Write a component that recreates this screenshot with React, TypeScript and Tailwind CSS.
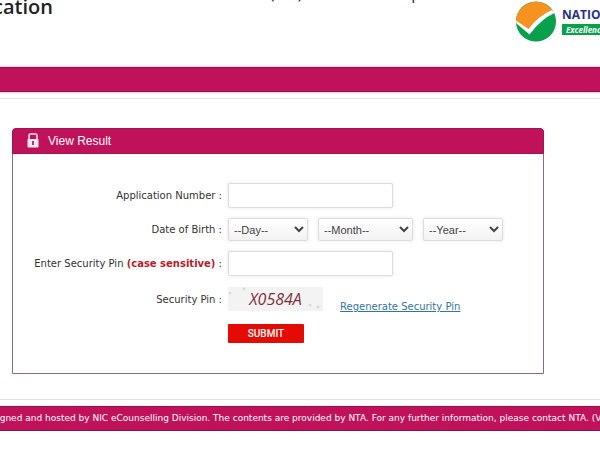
import type { ReactNode } from "react";

const DAYS = Array.from({ length: 31 }, (_, i) => String(i + 1).padStart(2, "0"));
const MONTHS = ["January", "February", "March", "April", "May", "June", "July", "August", "September", "October", "November", "December"];
const YEARS = Array.from({ length: 20 }, (_, i) => String(2005 - i));

const inputClass =
  "w-[165px] h-[25px] px-2 rounded-xs border border-[#dcdcdc] bg-white text-[11px] shadow-[0_0_3px_1px_rgba(0,0,0,0.06)] outline-none";
const selectClass =
  "h-[23px] pl-px pr-0 rounded-xs border border-[#dcdcdc] bg-linear-to-b from-white to-[#f3f3f3] text-[#444] font-['Liberation_Sans',sans-serif] text-[11px] shadow-[0_0_3px_1px_rgba(0,0,0,0.06)] outline-none";

function Row({ label, htmlFor, children }: { label: ReactNode; htmlFor?: string; children: ReactNode }) {
  return (
    <div className="flex items-center">
      <label htmlFor={htmlFor} className="w-[209px] shrink-0 text-right whitespace-nowrap mr-[6px]">
        {label} :
      </label>
      {children}
    </div>
  );
}

function Logo() {
  return (
    <svg width="40" height="41" viewBox="0 0 40 41" className="shrink-0" aria-hidden="true">
      <circle cx="20" cy="20.5" r="20" fill="#08a04c" />
      <path d="M0 20.5 A20 20 0 0 1 36.500 9.500 Q24 15 13 29 Z" fill="#f7921e" />
      <path d="M0 19.500 L12.500 28 Q22 15 36 9 L38.500 12 Q25 18 13.500 33.500 L0.500 22.500 Z" fill="#fff" />
    </svg>
  );
}

function Lock() {
  return (
    <svg width="12" height="15" viewBox="0 0 12 15" className="shrink-0" aria-hidden="true">
      <path d="M2 7 V2.500 Q2 1 3.500 1 H8.500 Q10 1 10 2.500 V7" fill="none" stroke="#fbe6f0" strokeWidth="1.600" />
      <rect x="0.500" y="6" width="11" height="8.500" rx="0.800" fill="#fbe6f0" />
      <path d="M6 8 V12" stroke="#8c1448" strokeWidth="1.600" />
    </svg>
  );
}

function CaptchaSpecks() {
  return (
    <svg viewBox="0 0 95 24" className="absolute inset-0 w-full h-full" aria-hidden="true">
      <g fill="#d9d5da">
        <circle cx="2" cy="6" r="1.300" />
        <circle cx="16" cy="2" r="1.400" />
        <circle cx="82" cy="18" r="1.300" />
        <circle cx="90" cy="20" r="1.500" />
      </g>
    </svg>
  );
}

export default function App() {
  return (
    <div className="w-full overflow-hidden bg-white font-['DejaVu_Sans',sans-serif] text-[10px] text-[#333]">
      <header className="flex justify-between h-[67px]">
        <div className="w-[53px] flex justify-end overflow-hidden font-['Open_Sans',sans-serif] font-semibold text-[20px] leading-[13px] text-[#222]">
          Education
        </div>
        {/* exam title, scrolled up so that only its descenders remain */}
        <div className="ml-[38px] mr-auto h-[3px] flex items-end overflow-hidden whitespace-nowrap font-['Open_Sans',sans-serif] text-[16px] leading-[20px] text-[#222]">
          Common Entrance Test (UG) Session – 1 Paper
        </div>
        <div className="flex w-[84px] pt-px">
          <Logo />
          <div className="pl-[6px] pt-2 whitespace-nowrap font-['Open_Sans',sans-serif] font-bold">
            <p className="text-[12px] leading-[12px] text-[#2c3184]">NATIONAL TESTING AGENCY</p>
            <p className="mt-[3px] pl-1 h-[11px] bg-[#08a04c] text-[8px] leading-[11px] italic text-white">Excellence in Assessment</p>
          </div>
        </div>
      </header>

      <div className="h-[25px] bg-[#bf125b] border-y border-[#8c1448] shadow-[0_0_2px_1px_#efc9da]" />
      <div className="mt-[6px] border-t border-[#e4e7e8]" />

      <main className="pt-[29px] pb-[25px] pl-[12px] pr-[56px]">
        <section className="rounded-t-sm border border-[#8f6a7c]">
          <h1 className="-mx-px -mt-px flex items-center h-[26px] pb-px px-[14px] gap-[9px] rounded-t-sm bg-[#bf125b] border border-[#9c1650] text-white font-['Liberation_Sans',sans-serif] text-[12px]">
            <Lock />
            View Result
          </h1>
          <form className="flex flex-col gap-[10px] pt-[29px] pb-[30px]" onSubmit={(e) => e.preventDefault()}>
            <Row label="Application Number" htmlFor="appno">
              <input id="appno" type="text" className={inputClass} />
            </Row>
            <Row label="Date of Birth" htmlFor="day">
              <div className="flex gap-[10px]">
                <select id="day" className={`${selectClass} w-[80px]`}>
                  <option>--Day--</option>
                  {DAYS.map((d) => <option key={d}>{d}</option>)}
                </select>
                <select aria-label="Month" className={`${selectClass} w-[95px]`}>
                  <option>--Month--</option>
                  {MONTHS.map((m) => <option key={m}>{m}</option>)}
                </select>
                <select aria-label="Year" className={`${selectClass} w-[80px]`}>
                  <option>--Year--</option>
                  {YEARS.map((y) => <option key={y}>{y}</option>)}
                </select>
              </div>
            </Row>
            <Row label={<>Enter Security Pin <b className="text-[#b5202c]">(case sensitive)</b></>} htmlFor="pin">
              <input id="pin" type="text" className={inputClass} />
            </Row>
            <Row label="Security Pin">
              <div className="relative w-[95px] h-[24px] bg-[#f4f3f4] text-center font-['Open_Sans',sans-serif] italic text-[16px] leading-[24px] text-[#7d3038]">
                <CaptchaSpecks />
                X0584A
              </div>
              <a href="#regenerate" className="ml-[17px] mt-4 leading-[10px] underline text-[#34759d]">Regenerate Security Pin</a>
            </Row>
            <button type="submit" className="mt-[2px] ml-[215px] w-[76px] h-[19px] rounded-[1px] bg-[#e40b05] text-white font-['Roboto',sans-serif] font-medium text-[10px]">
              SUBMIT
            </button>
          </form>
        </section>
      </main>

      <div className="border-t border-[#e2dfe0]" />
      <footer className="mt-[6px] flex justify-center h-[25px] bg-[#bf125b] border-y border-[#8c1448] shadow-[0_0_2px_#efc9da] text-white text-[9px] leading-[23px] whitespace-nowrap">
        Site is designed and hosted by NIC eCounselling Division. The contents are provided by NTA. For any further information, please contact NTA. (Version 1.0)
      </footer>
    </div>
  );
}
